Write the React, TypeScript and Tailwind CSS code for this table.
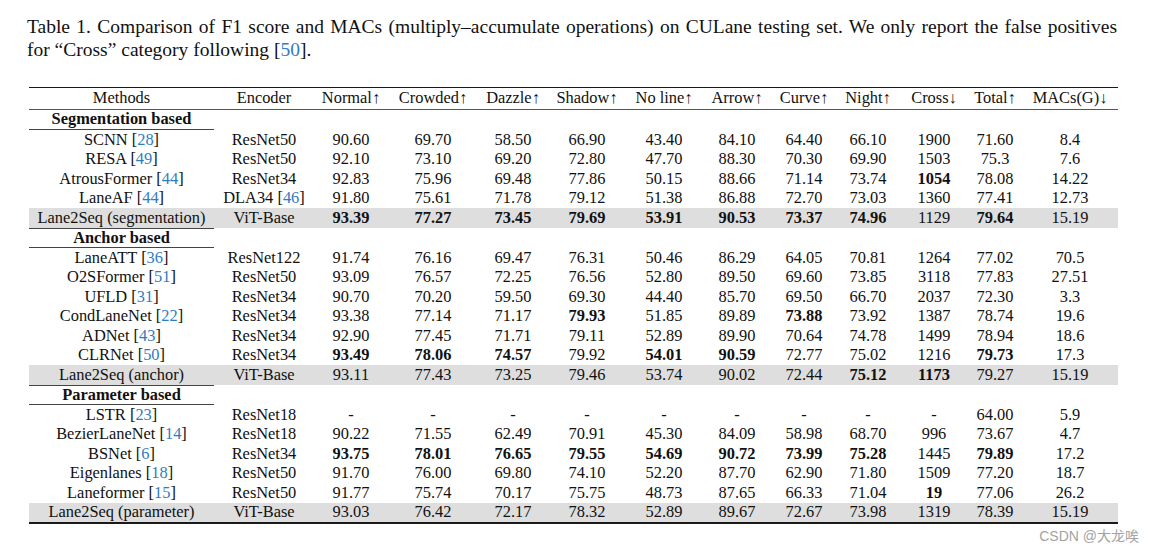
import React from "react";

type Row = { m: string; c?: string; e: string; ec?: string; v: string[]; gray?: boolean };
type Group = { title: string; first?: boolean; rows: Row[] };

const COLS =
  "grid grid-cols-[185px_100px_74px_90px_70px_78px_76px_70px_64px_64px_68px_54px_96px]";

const headers = [
  "Methods",
  "Encoder",
  "Normal↑",
  "Crowded↑",
  "Dazzle↑",
  "Shadow↑",
  "No line↑",
  "Arrow↑",
  "Curve↑",
  "Night↑",
  "Cross↓",
  "Total↑",
  "MACs(G)↓",
];

const sp = (s: string) => s.split(" ");

const groups: Group[] = [
  {
    title: "Segmentation based",
    first: true,
    rows: [
      { m: "SCNN", c: "28", e: "ResNet50", v: sp("90.60 69.70 58.50 66.90 43.40 84.10 64.40 66.10 1900 71.60 8.4") },
      { m: "RESA", c: "49", e: "ResNet50", v: sp("92.10 73.10 69.20 72.80 47.70 88.30 70.30 69.90 1503 75.3 7.6") },
      { m: "AtrousFormer", c: "44", e: "ResNet34", v: sp("92.83 75.96 69.48 77.86 50.15 88.66 71.14 73.74 *1054 78.08 14.22") },
      { m: "LaneAF", c: "44", e: "DLA34", ec: "46", v: sp("91.80 75.61 71.78 79.12 51.38 86.88 72.70 73.03 1360 77.41 12.73") },
      { m: "Lane2Seq (segmentation)", e: "ViT-Base", gray: true, v: sp("*93.39 *77.27 *73.45 *79.69 *53.91 *90.53 *73.37 *74.96 1129 *79.64 15.19") },
    ],
  },
  {
    title: "Anchor based",
    rows: [
      { m: "LaneATT", c: "36", e: "ResNet122", v: sp("91.74 76.16 69.47 76.31 50.46 86.29 64.05 70.81 1264 77.02 70.5") },
      { m: "O2SFormer", c: "51", e: "ResNet50", v: sp("93.09 76.57 72.25 76.56 52.80 89.50 69.60 73.85 3118 77.83 27.51") },
      { m: "UFLD", c: "31", e: "ResNet34", v: sp("90.70 70.20 59.50 69.30 44.40 85.70 69.50 66.70 2037 72.30 3.3") },
      { m: "CondLaneNet", c: "22", e: "ResNet34", v: sp("93.38 77.14 71.17 *79.93 51.85 89.89 *73.88 73.92 1387 78.74 19.6") },
      { m: "ADNet", c: "43", e: "ResNet34", v: sp("92.90 77.45 71.71 79.11 52.89 89.90 70.64 74.78 1499 78.94 18.6") },
      { m: "CLRNet", c: "50", e: "ResNet34", v: sp("*93.49 *78.06 *74.57 79.92 *54.01 *90.59 72.77 75.02 1216 *79.73 17.3") },
      { m: "Lane2Seq (anchor)", e: "ViT-Base", gray: true, v: sp("93.11 77.43 73.25 79.46 53.74 90.02 72.44 *75.12 *1173 79.27 15.19") },
    ],
  },
  {
    title: "Parameter based",
    rows: [
      { m: "LSTR", c: "23", e: "ResNet18", v: sp("- - - - - - - - - 64.00 5.9") },
      { m: "BezierLaneNet", c: "14", e: "ResNet18", v: sp("90.22 71.55 62.49 70.91 45.30 84.09 58.98 68.70 996 73.67 4.7") },
      { m: "BSNet", c: "6", e: "ResNet34", v: sp("*93.75 *78.01 *76.65 *79.55 *54.69 *90.72 *73.99 *75.28 1445 *79.89 17.2") },
      { m: "Eigenlanes", c: "18", e: "ResNet50", v: sp("91.70 76.00 69.80 74.10 52.20 87.70 62.90 71.80 1509 77.20 18.7") },
      { m: "Laneformer", c: "15", e: "ResNet50", v: sp("91.77 75.74 70.17 75.75 48.73 87.65 66.33 71.04 *19 77.06 26.2") },
      { m: "Lane2Seq (parameter)", e: "ViT-Base", gray: true, v: sp("93.03 76.42 72.17 78.32 52.89 89.67 72.67 73.98 1319 78.39 15.19") },
    ],
  },
];

function Named({ t, n }: { t: string; n?: string }) {
  return (
    <span>
      {t}
      {n && (
        <>
          {" "}[<span className="text-[#2f7cc2]">{n}</span>]
        </>
      )}
    </span>
  );
}

function Cell({ children }: { children: React.ReactNode }) {
  return <div className="flex items-center justify-center whitespace-nowrap">{children}</div>;
}

export default function App() {
  return (
    <div
      className="relative w-[1156px] h-[552px] bg-white text-[#111] overflow-hidden"
      style={{ fontFamily: '"Liberation Serif", "Times New Roman", serif' }}
    >
      <p className="ml-[27px] w-[1090px] pt-[15px] text-[19.5px] leading-[23px] text-justify">
        Table 1. Comparison of F1 score and MACs (multiply–accumulate operations) on CULane testing set. We only
        report the false positives for “Cross” category following [<span className="text-[#2f7cc2]">50</span>].
      </p>

      <div className="ml-[29px] mt-[26px] w-[1089px] text-[16.4px] leading-none">
        <div className={`${COLS} h-[23px] border-t-[1.5px] border-b border-t-[#1a1a1a] border-b-[#555]`}>
          {headers.map((h) => (
            <Cell key={h}>{h}</Cell>
          ))}
        </div>

        {groups.map((g) => (
          <div key={g.title}>
            <div className={`${COLS} ${g.first ? "h-[20.25px]" : "h-[20.5px]"}`}>
              <div
                className={`flex items-center justify-center font-bold border-b border-[#444] ${
                  g.first ? "" : "border-t"
                }`}
              >
                {g.title}
              </div>
            </div>
            {g.rows.map((r) => (
              <div key={r.m} className={`${COLS} h-[19.5px] ${r.gray ? "bg-[#dedede]" : ""}`}>
                <Cell>
                  <Named t={r.m} n={r.c} />
                </Cell>
                <Cell>
                  <Named t={r.e} n={r.ec} />
                </Cell>
                {r.v.map((x, i) =>
                  x.startsWith("*") ? (
                    <Cell key={i}>
                      <span className="font-bold">{x.slice(1)}</span>
                    </Cell>
                  ) : (
                    <Cell key={i}>{x}</Cell>
                  )
                )}
              </div>
            ))}
          </div>
        ))}
        <div className="h-[1.5px] bg-[#1a1a1a]" />
      </div>

      <div
        className="absolute right-[17px] top-[527px] text-[14px] leading-[18px] text-[#a3a3a3]"
        style={{ fontFamily: '"Liberation Sans", Arial, "Noto Sans CJK SC", sans-serif' }}
      >
        CSDN @大龙唉
      </div>
    </div>
  );
}
